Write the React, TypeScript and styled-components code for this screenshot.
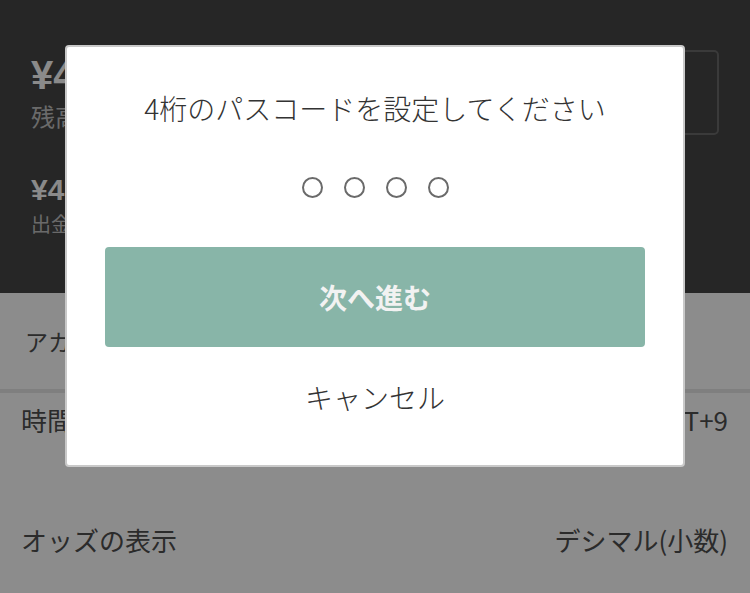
import React from 'react'
import styled, { createGlobalStyle } from 'styled-components'

const GlobalStyle = createGlobalStyle`
  html, body {
    margin: 0;
    padding: 0;
    background: #ffffff;
  }
  body {
    font-family: "Noto Sans CJK JP", "Noto Sans", sans-serif;
  }
`

interface Setting {
  label: string,
  value?: string
}

const settings: Array<Setting> = [
  { label: '時間帯', value: 'GMT+9' },
  { label: 'オッズの表示', value: 'デシマル(小数)' },
]

const App: React.FC = () => (
  <>
    <GlobalStyle />
    <StyledPage>
      <StyledHeader>
        <StyledBalances>
          <StyledAmount size={40}>¥4,820</StyledAmount>
          <StyledCaption size={24}>残高</StyledCaption>
          <StyledAmount size={30} spaced>¥4,820</StyledAmount>
          <StyledCaption size={20}>出金可能額</StyledCaption>
        </StyledBalances>
        <StyledOutlineButton />
      </StyledHeader>
      <StyledAccountRow>アカウント設定</StyledAccountRow>
      <StyledDivider />
      {settings.map((s) => (
        <StyledRow key={s.label}>
          <span>{s.label}</span>
          <span>{s.value}</span>
        </StyledRow>
      ))}
      <StyledOverlay>
        <StyledModal>
          <StyledTitle>4桁のパスコードを設定してください</StyledTitle>
          <StyledDots>
            {[0, 1, 2, 3].map((i) => (
              <StyledDot key={i} />
            ))}
          </StyledDots>
          <StyledPrimary>次へ進む</StyledPrimary>
          <StyledCancel>キャンセル</StyledCancel>
        </StyledModal>
      </StyledOverlay>
    </StyledPage>
  </>
)

const StyledPage = styled.div`
  position: relative;
  width: 750px;
  height: 593px;
  overflow: hidden;
  background: #ffffff;
`

const StyledHeader = styled.div`
  height: 293px;
  box-sizing: border-box;
  background: #454545;
  display: flex;
  justify-content: space-between;
  align-items: flex-start;
  padding: 50px 31px 0 31px;
`

const StyledBalances = styled.div`
  display: flex;
  flex-direction: column;
`

const StyledAmount = styled.div<{ size: number, spaced?: boolean }>`
  color: #fcfcfc;
  font-family: "Liberation Sans", "Noto Sans CJK JP", sans-serif;
  font-weight: 700;
  font-size: ${(p) => p.size}px;
  line-height: ${(p) => p.size + 10}px;
  margin-top: ${(p) => (p.spaced ? 38 : 0)}px;
`

const StyledCaption = styled.div<{ size: number }>`
  color: #c2c2c2;
  font-size: ${(p) => p.size}px;
  line-height: ${(p) => p.size + 8}px;
`

const StyledOutlineButton = styled.div`
  width: 230px;
  height: 85px;
  box-sizing: border-box;
  border: 2px solid #6b6b6b;
  border-radius: 5px;
`

const StyledAccountRow = styled.div`
  height: 96px;
  display: flex;
  align-items: center;
  padding-left: 25px;
  font-size: 23px;
  color: #4f4f4f;
`

const StyledDivider = styled.div`
  height: 4px;
  background: #e8e8e8;
`

const StyledRow = styled.div`
  height: 120px;
  box-sizing: border-box;
  display: flex;
  justify-content: space-between;
  align-items: flex-start;
  padding: 12px 22px 0 21px;
  font-size: 26px;
  line-height: 30px;
  color: #4f4f4f;
`

const StyledOverlay = styled.div`
  position: absolute;
  inset: 0;
  background: rgba(0, 0, 0, 0.45);
  display: flex;
  justify-content: center;
  align-items: flex-start;
  padding-top: 45px;
`

const StyledModal = styled.div`
  width: 620px;
  height: 422px;
  box-sizing: border-box;
  background: #ffffff;
  border: 2px solid #c9c9c9;
  border-radius: 4px;
  padding: 0 38px;
  display: flex;
  flex-direction: column;
  align-items: center;
`

const StyledTitle = styled.div`
  margin-top: 41px;
  font-size: 28px;
  font-weight: 300;
  line-height: 40px;
  color: #333333;
  white-space: nowrap;
`

const StyledDots = styled.div`
  margin-top: 49px;
  display: flex;
  gap: 21px;
`

const StyledDot = styled.div`
  width: 21px;
  height: 21px;
  box-sizing: border-box;
  border: 2px solid #6a6a6a;
  border-radius: 50%;
`

const StyledPrimary = styled.div`
  margin-top: 49px;
  width: 540px;
  height: 100px;
  border-radius: 4px;
  background: #88b5a8;
  display: flex;
  align-items: center;
  justify-content: center;
  color: #f2f2f2;
  font-size: 28px;
  font-weight: 700;
`

const StyledCancel = styled.div`
  margin-top: 30px;
  font-size: 28px;
  font-weight: 300;
  line-height: 40px;
  color: #333333;
`

export default App
